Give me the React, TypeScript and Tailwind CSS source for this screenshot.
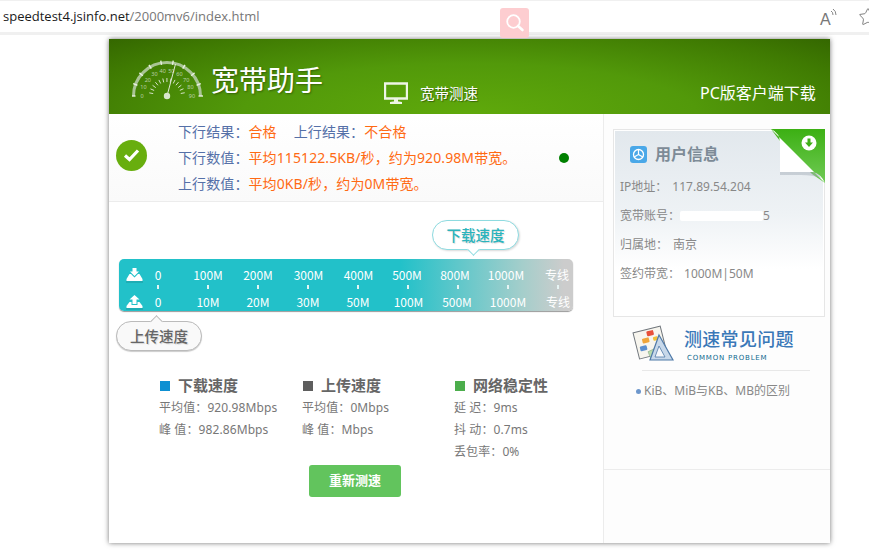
import { Star } from 'lucide-react';

const downloadLabels = [
  { text: '0', cls: 'w-[40px] pr-[10px]' },
  { text: '100M', cls: 'w-[50px]' },
  { text: '200M', cls: 'w-[50px]' },
  { text: '300M', cls: 'w-[50px] pl-[1px]' },
  { text: '400M', cls: 'w-[50px] pl-[1px]' },
  { text: '500M', cls: 'w-[50px] pr-[2px]' },
  { text: '800M', cls: 'w-[50px] pr-[6px]' },
  { text: '1000M', cls: 'w-[50px] pr-[4px]' },
  { text: '专线', cls: 'w-[50px] pr-[2px]' },
];

const uploadLabels = [
  { text: '0', cls: 'w-[40px] pr-[10px]' },
  { text: '10M', cls: 'w-[50px]' },
  { text: '20M', cls: 'w-[50px]' },
  { text: '30M', cls: 'w-[50px]' },
  { text: '50M', cls: 'w-[50px]' },
  { text: '100M', cls: 'w-[50px] pl-[1px]' },
  { text: '500M', cls: 'w-[50px] pr-[2px]' },
  { text: '1000M', cls: 'w-[50px]' },
  { text: '专线', cls: 'w-[50px]' },
];

const stats = [
  {
    title: '下载速度',
    square: 'bg-[#0e90d2]',
    width: 'w-[143px]',
    lines: ['平均值：920.98Mbps', '峰 值：982.86Mbps'],
  },
  {
    title: '上传速度',
    square: 'bg-[#5e5e5e]',
    width: 'w-[152px]',
    lines: ['平均值：0Mbps', '峰 值：Mbps'],
  },
  {
    title: '网络稳定性',
    square: 'bg-[#4cae4c]',
    width: 'w-[130px]',
    lines: ['延 迟：9ms', '抖 动：0.7ms', '丢包率：0%'],
  },
];

const Gauge = () => {
  const cx = 35;
  const cy = 38;
  const nums = [0, 10, 20, 30, 40, 50, 60, 70, 80, 90];
  const point = (deg: number, r: number) => {
    const a = (deg * Math.PI) / 180;
    return [cx - r * Math.cos(a), cy - r * Math.sin(a)];
  };
  return (
    <svg width="74" height="44" viewBox="0 0 74 44" className="shrink-0">
      <path d="M1.5 38 A33.5 33.5 0 0 1 68.5 38" fill="none" stroke="#a9c494" strokeWidth="3" />
      {nums.map((n, i) => {
        const deg = i * 20;
        const [x1, y1] = point(deg, 31.5);
        const [x2, y2] = point(deg, 36);
        const [tx, ty] = point(deg, 25);
        return (
          <g key={n}>
            <line x1={x1} y1={y1} x2={x2} y2={y2} stroke="#e8f0e0" strokeWidth="1.4" />
            <text x={tx} y={ty + 2} fontSize="5.5" fill="#bcd0aa" textAnchor="middle">
              {n}
            </text>
          </g>
        );
      })}
      {Array.from({ length: 13 }).map((_, i) => {
        const [x1, y1] = point(10 + i * 13.3, 14);
        const [x2, y2] = point(10 + i * 13.3, 18);
        return <line key={i} x1={x1} y1={y1} x2={x2} y2={y2} stroke="#d5e2c8" strokeWidth="1" />;
      })}
      <line x1={cx} y1={cy} x2={cx + 8.5} y2="6" stroke="#dfe9d5" strokeWidth="1" />
      <circle cx={cx} cy={cy} r="3.2" fill="#d9e7cc" />
    </svg>
  );
};

const TrayIcon = ({ up }: { up?: boolean }) => (
  <svg width="17" height="15" viewBox="0 0 17 15" className="shrink-0">
    {up ? (
      <>
        <path d="M8.5 0 L13.5 4.5 H10.5 V9 H6.5 V4.5 H3.5 Z" fill="#fff" />
        <path d="M3.5 7 L0.5 11 V13 H16.5 V11 L13.5 7 H11.5 V10 H5.5 V7 Z" fill="#fff" />
      </>
    ) : (
      <>
        <path d="M6.5 0 H10.5 V3.5 H13 L8.5 8 L4 3.5 H6.5 Z" fill="#fff" />
        <path d="M3.5 6 L0.5 11 V13 H16.5 V11 L13.5 6 L12 6 L8.5 9.5 L5 6 Z" fill="#fff" />
      </>
    )}
    <rect x="0" y="13.5" width="17" height="1" fill="#1a9aa0" />
  </svg>
);

const FaqIcon = () => (
  <svg width="42" height="38" viewBox="0 0 42 38" className="shrink-0">
    <g transform="rotate(-14 18 18)">
      <rect x="4" y="4" width="28" height="27" fill="#f7f5ee" stroke="#70767c" strokeWidth="1" />
      <rect x="17" y="6" width="7" height="5" rx="1" fill="#e8503a" />
      <rect x="11" y="12" width="7" height="5" rx="1" fill="#f0a53a" />
      <rect x="22" y="13" width="5" height="4" rx="1" fill="#f0c23a" />
      <rect x="7" y="19" width="7" height="5" rx="1" fill="#5b8fd0" />
      <path d="M14 26 L24 24 L25 32 L15 33 Z" fill="#b9dcae" stroke="#8cab86" strokeWidth="0.6" />
    </g>
    <path d="M27 10 L41 35 L18 35 Z" fill="#c7d8ea" stroke="#4f7aa8" strokeWidth="1.2" />
    <path d="M27 21 L33 32 L23 32 Z" fill="#f6f8fb" stroke="#4f7aa8" strokeWidth="0.8" />
  </svg>
);

export default function App() {
  return (
    <div className="relative h-[554px] w-[869px] overflow-hidden bg-white font-['Noto_Sans','Noto_Sans_CJK_SC',sans-serif]">
      {/* browser address bar */}
      <div className="flex h-[35px] items-center justify-between border-t-[1px] border-b-[3px] border-[#f0f0f0] pl-[3px]">
        <div className="pt-[1px] text-[13px] text-[#777] font-['Open_Sans',sans-serif]">
          <span className="text-[#1a1a1a]">speedtest4.jsinfo.net</span>/2000mv6/index.html
        </div>
        <div className="flex w-[49px] items-center gap-[21px]">
          <div className="relative h-[20px] w-[17px] shrink-0">
            <span className="text-[16px] leading-[20px] text-[#777] font-['Liberation_Sans',sans-serif]">A</span>
            <svg width="8" height="9" viewBox="0 0 8 9" className="absolute right-[-1px] top-[1px]">
              <path d="M1 3 Q3 4 3 7 M3 1 Q6 3 6 7" fill="none" stroke="#777" strokeWidth="0.9" />
            </svg>
          </div>
          <Star className="h-[20px] w-[20px] shrink-0 text-[#666]" strokeWidth={1} />
        </div>
      </div>

      {/* floating search button */}
      <div className="absolute left-[500px] top-[8px] flex h-[30px] w-[29px] items-center justify-center rounded-[3px] bg-[#fdcdd0]">
        <svg width="20" height="20" viewBox="0 0 20 20">
          <circle cx="8.5" cy="8.5" r="6.3" fill="none" stroke="#fff" strokeWidth="1.8" />
          <path d="M13 13 L17.5 17" stroke="#fff" strokeWidth="2.6" strokeLinecap="round" />
        </svg>
      </div>

      {/* speed test card */}
      <div className="ml-[109px] mt-[4px] h-[504px] w-[721px] bg-white shadow-[0_0_5px_rgba(0,0,0,0.55)]">
        <div className="flex h-[75px] bg-[radial-gradient(ellipse_70%_150%_at_50%_100%,#5fa90b_0%,#52990a_45%,#3f7a02_80%,#336500_100%)] text-white">
          <div className="ml-[23px] mt-[19px]">
            <Gauge />
          </div>
          <div className="ml-[5px] mt-[22px] w-[173px] text-[28px] leading-[38px] [text-shadow:1px_1px_2px_rgba(0,0,0,0.35)]">
            宽带助手
          </div>
          <svg width="24" height="23" viewBox="0 0 24 23" className="mt-[43px]">
            <path d="M1 1.5 H23 V16.5 H1 Z" fill="none" stroke="#eef5e6" strokeWidth="2.4" />
            <path d="M10 17 H14 V20 H10 Z" fill="#eef5e6" />
            <path d="M6 20 Q12 18.5 18 20 V22 H6 Z" fill="#eef5e6" />
          </svg>
          <div className="ml-[12px] mt-[44px] w-[280px] text-[14.5px] leading-[20px] [text-shadow:1px_1px_1px_rgba(0,0,0,0.4)]">
            宽带测速
          </div>
          <div className="mt-[42px] text-[16px] leading-[24px]">PC版客户端下载</div>
        </div>

        <div className="flex h-[429px]">
          <div className="w-[494px] shrink-0">
            <div className="flex h-[88px] items-center border-b border-[#ececec] bg-gradient-to-b from-white to-[#fafafa] pl-[7px]">
              <div className="mb-[5px] flex h-[31px] w-[31px] shrink-0 items-center justify-center rounded-full bg-[#68ae0e]">
                <svg width="17" height="14" viewBox="0 0 17 14">
                  <path d="M2 7.5 L6.5 11.5 L15 2.5" fill="none" stroke="#fff" strokeWidth="3.2" />
                </svg>
              </div>
              <div className="ml-[31px] w-[381px] text-[14px] leading-[26px] tracking-[0.1px] text-[#5570a8]">
                <div>
                  下行结果：<span className="text-[#ff6a13]">合格</span>
                  <span className="ml-[17px]">上行结果：</span>
                  <span className="text-[#ff6a13]">不合格</span>
                </div>
                <div>
                  下行数值：<span className="text-[#ff6a13]">平均115122.5KB/秒，约为920.98M带宽。</span>
                </div>
                <div>
                  上行数值：<span className="text-[#ff6a13]">平均0KB/秒，约为0M带宽。</span>
                </div>
              </div>
              <div className="h-[10px] w-[10px] rounded-full bg-[#008000]" />
            </div>

            <div className="relative ml-[10px] mt-[57px] h-[52px] w-[454px] rounded-[5px] bg-[linear-gradient(90deg,#22c1c9_0%,#22c1c9_62%,#a5cecb_89%,#cccccc_98%)] shadow-[0_1px_1px_#999] font-['Noto_Sans_CJK_SC',sans-serif] text-[12px] text-white">
              <div className="flex h-[26px] items-center pl-[7px] pt-[6px]">
                <TrayIcon />
                {downloadLabels.map(label => (
                  <div key={label.text} className={`shrink-0 text-center ${label.cls}`}>
                    {label.text}
                  </div>
                ))}
              </div>
              <div className="flex h-[2px] pl-[14px]">
                {downloadLabels.map(label => (
                  <div key={label.text} className="flex w-[50px] shrink-0 justify-center">
                    <div className="h-[4px] w-[2px] bg-[#e6f4f4]" />
                  </div>
                ))}
              </div>
              <div className="flex h-[24px] items-center pl-[7px] pt-[6px]">
                <TrayIcon up />
                {uploadLabels.map(label => (
                  <div key={label.text} className={`shrink-0 text-center ${label.cls}`}>
                    {label.text}
                  </div>
                ))}
              </div>

              {/* download bubble */}
              <div className="absolute left-[313px] top-[-39px] flex h-[30px] w-[87px] items-center justify-center rounded-[15px] border border-[#8edbe0] bg-white text-[14.5px] font-medium text-[#2ab4bc] shadow-[1px_1px_2px_rgba(0,0,0,0.15)] [text-shadow:1px_1px_1px_rgba(0,0,0,0.15)]">
                下载速度
                <div className="absolute bottom-[-5px] left-[36px] h-[9px] w-[9px] rotate-45 border-b border-r border-[#8edbe0] bg-white" />
              </div>

              {/* upload bubble */}
              <div className="absolute bottom-[-40px] left-[-3px] flex h-[30px] w-[86px] items-center justify-center rounded-[15px] border border-[#bbb] bg-[#f9f9f9] text-[14.5px] font-medium text-[#666] shadow-[0_1px_1px_rgba(0,0,0,0.2)] [text-shadow:1px_1px_1px_rgba(0,0,0,0.15)]">
                <div className="absolute left-[35px] top-[-5px] h-[9px] w-[9px] rotate-45 border-l border-t border-[#bbb] bg-[#f9f9f9]" />
                <span className="relative">上传速度</span>
              </div>
            </div>

            <div className="ml-[51px] mt-[63px] flex">
              {stats.map(stat => (
                <div key={stat.title} className={stat.width}>
                  <div className="flex h-[23px] items-center text-[15px] font-bold text-[#666]">
                    <div className={`mr-[8px] h-[10px] w-[10px] ${stat.square}`} />
                    {stat.title}
                  </div>
                  {stat.lines.map(line => (
                    <div key={line} className="-ml-[1px] text-[12px] leading-[22px] tracking-[0.1px] text-[#777]">
                      {line}
                    </div>
                  ))}
                </div>
              ))}
            </div>
            <button className="ml-[200px] mt-[2px] flex h-[32px] w-[92px] items-center justify-center rounded-[3px] bg-[#62c45d] text-[13px] font-bold text-white">
              重新测速
            </button>
          </div>

          {/* side panel */}
          <div className="flex-1 border-l border-[#ececec] bg-[#fdfdfd]">
            <div className="relative ml-[9px] mt-[15px] h-[188px] w-[212px] border border-[#e6e6e6] bg-white p-[1px]">
              <div className="h-full bg-[linear-gradient(180deg,#e2e8ed_0%,#eef2f5_45%,#ffffff_75%)] pl-[5px] pt-[11px] text-[12px] text-[#888]">
                <div className="flex h-[24px] items-center text-[16px] font-bold text-[#7d8b97]">
                  <div className="ml-[10px] mr-[8px] flex h-[17px] w-[17px] items-center justify-center rounded-[3px] bg-[#4aa8e8]">
                    <svg width="13" height="13" viewBox="0 0 13 13">
                      <circle cx="6.5" cy="6.5" r="5" fill="none" stroke="#fff" strokeWidth="1.3" />
                      <path d="M6.5 1.5 V6.5 L2.2 9 M6.5 6.5 L10.8 9" stroke="#fff" strokeWidth="1.2" fill="none" />
                    </svg>
                  </div>
                  用户信息
                </div>
                <div className="mt-[6px] flex h-[29px] items-center">
                  IP地址：<span className="ml-[5px]">117.89.54.204</span>
                </div>
                <div className="flex h-[29px] items-center">
                  宽带账号：
                  <div className="h-[10px] w-[83px] rounded-[2px] bg-white" />
                  <span>5</span>
                </div>
                <div className="flex h-[29px] items-center">
                  归属地：<span className="ml-[5px]">南京</span>
                </div>
                <div className="flex h-[29px] items-center">
                  签约带宽：<span className="ml-[4px]">1000M|50M</span>
                </div>
              </div>
              {/* folded corner */}
              <svg width="54" height="56" viewBox="0 0 54 56" className="absolute right-[-1px] top-[-1px]">
                <defs>
                  <linearGradient id="fold" x1="0" y1="0" x2="0" y2="1">
                    <stop offset="0" stopColor="#3cb013" />
                    <stop offset="1" stopColor="#70ca55" />
                  </linearGradient>
                </defs>
                <path d="M0 0 H54 V54 L41 45 L9 12 Z" fill="url(#fold)" />
                <path d="M0 0 Q9 4 9 14 V43 H42 Q50 45 54 54 Z" fill="#fff" />
                <path d="M9 43 H42 Q48 44 50 49 Q42 46 30 46 H9 Z" fill="#9fa9b3" opacity="0.45" />
                <circle cx="38" cy="14" r="7.5" fill="#fff" />
                <path d="M36.5 9.5 H39.5 V13.5 H42 L38 18 L34 13.5 H36.5 Z" fill="#3fae18" />
              </svg>
            </div>

            <div className="ml-[28px] mt-[8px] flex">
              <FaqIcon />
              <div className="ml-[10px]">
                <div className="text-[18px] font-medium leading-[26px] tracking-[0.3px] text-[#3a78b8] font-['Noto_Sans_CJK_SC',sans-serif]">
                  测速常见问题
                </div>
                <div className="ml-[3px] mt-[2px] text-[7px] leading-[10px] tracking-[0.8px] text-[#0e6a8f] font-['DejaVu_Sans',sans-serif]">
                  COMMON PROBLEM
                </div>
              </div>
            </div>
            <div className="ml-[38px] mt-[7px] h-[1px] w-[168px] bg-[#e8e8e8]" />
            <div className="ml-[32px] mt-[10px] flex h-[20px] items-center text-[12px] text-[#888]">
              <div className="mr-[3px] h-[5px] w-[5px] rounded-full bg-[#6d97cc]" />
              KiB、MiB与KB、MB的区别
            </div>
            <div className="mt-[68px] h-[1px] bg-[#ececec]" />
          </div>
        </div>
      </div>
    </div>
  );
}
